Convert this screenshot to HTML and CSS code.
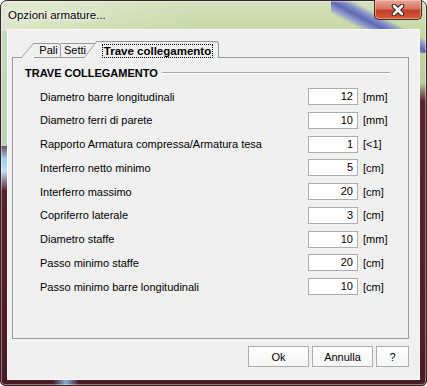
FILE: index.html
```html
<!DOCTYPE html>
<html>

<head>
    <title>Opzioni armature...</title>
    <link rel="stylesheet" href="styles.css">
</head>

<body>
    <div class="window">
        <div class="titlebar">
            <span class="title">Opzioni armature...</span>
            <div class="close">
                <svg width="14" height="12" viewBox="0 0 14 12">
                    <path d="M3 2 L11 10 M11 2 L3 10" stroke="#3a2222" stroke-width="4.6" stroke-linecap="round"/>
                    <path d="M3 2 L11 10 M11 2 L3 10" stroke="#fff" stroke-width="2.6" stroke-linecap="round"/>
                </svg>
            </div>
        </div>

        <div class="client">
            <div class="tabs">
                <span class="tab tab-pali">Pali</span>
                <span class="tab tab-setti">Setti</span>
                <span class="tab tab-active"><span class="focus">Trave collegamento</span></span>
            </div>

            <div class="panel">
                <div class="group-title">
                    <b>TRAVE COLLEGAMENTO</b>
                    <span class="rule"></span>
                </div>

                <div class="rows">
                    <span class="label">Diametro barre longitudinali</span>
                    <div class="field">12</div>
                    <span class="unit">[mm]</span>

                    <span class="label">Diametro ferri di parete</span>
                    <div class="field">10</div>
                    <span class="unit">[mm]</span>

                    <span class="label">Rapporto Armatura compressa/Armatura tesa</span>
                    <div class="field">1</div>
                    <span class="unit">[&lt;1]</span>

                    <span class="label">Interferro netto minimo</span>
                    <div class="field">5</div>
                    <span class="unit">[cm]</span>

                    <span class="label">Interferro massimo</span>
                    <div class="field">20</div>
                    <span class="unit">[cm]</span>

                    <span class="label">Copriferro laterale</span>
                    <div class="field">3</div>
                    <span class="unit">[cm]</span>

                    <span class="label">Diametro staffe</span>
                    <div class="field">10</div>
                    <span class="unit">[mm]</span>

                    <span class="label">Passo minimo staffe</span>
                    <div class="field">20</div>
                    <span class="unit">[cm]</span>

                    <span class="label">Passo minimo barre longitudinali</span>
                    <div class="field">10</div>
                    <span class="unit">[cm]</span>
                </div>
            </div>

            <div class="buttons">
                <button class="btn btn-wide">Ok</button>
                <button class="btn btn-wide">Annulla</button>
                <button class="btn btn-small">?</button>
            </div>
        </div>
    </div>
</body>

</html>
```

FILE: styles.css
```css
* {
    margin: 0;
    box-sizing: border-box;
}

body {
    width: 427px;
    height: 386px;
    overflow: hidden;
    font-family: "Liberation Sans", Arial, sans-serif;
    font-size: 11px;
    color: #000;
}

/* glass frame */
.window {
    width: 427px;
    height: 386px;
    padding: 0 6px 5px 6px;
    display: flex;
    flex-direction: column;
    border: 1px solid #3a2327;
    border-radius: 7px 7px 5px 5px;
    box-shadow: inset 0 0 0 1px rgba(255, 255, 255, 0.4);
    background:
        linear-gradient(28deg, transparent 38%, #8f97cf 44%, #5f68b2 50%, #8a93cb 56%, transparent 62%) no-repeat 330px 0 / 97px 52px,
        linear-gradient(to right, rgba(255, 255, 255, 0.35), rgba(255, 255, 255, 0) 45%) no-repeat 0 0 / 427px 30px,
        linear-gradient(to bottom, transparent, #9ccaee 35%, #c0e0f8 60%, transparent) no-repeat 0 140px / 8px 50px,
        linear-gradient(to bottom, #cdd8c0, #c4cfb8) no-repeat 0 0 / 8px 145px,
        linear-gradient(to right, transparent, #86aed2, transparent) no-repeat 52px 379px / 26px 7px,
        linear-gradient(to bottom, #d3e1bd 0, #c2d79d 40px, #b9cc9e 82px, #5b2430 100px, #4b1b25 100%);
}

.titlebar {
    height: 28px;
    display: flex;
    justify-content: space-between;
    align-items: flex-start;
    padding-left: 1px;
}

.title {
    padding-top: 8px;
    font-size: 11.5px;
    text-shadow: 0 0 6px #fff, 0 0 3px #fff, 0 0 10px rgba(255, 255, 255, 0.8);
}

.close {
    width: 48px;
    height: 20px;
    margin-top: -1px;
    margin-right: -2px;
    display: flex;
    align-items: center;
    justify-content: center;
    border: 1px solid #4a2522;
    border-top: none;
    border-radius: 0 0 5px 5px;
    background: linear-gradient(to bottom, #e9a796 0, #d87563 45%, #c2402a 55%, #d65b36 100%);
    box-shadow: inset 0 0 0 1px rgba(255, 220, 200, 0.45);
}

.client {
    flex: 1;
    border: 1px solid rgba(255, 255, 255, 0.6);
    background-color: #f0f0f0;
    padding-top: 11px;
}

/* tab strip */
.tabs {
    height: 17px;
    margin-left: 26px;
    margin-bottom: -1px;
    display: flex;
    align-items: flex-start;
    position: relative;
    z-index: 1;
}

.tab {
    position: relative;
    height: 14px;
    margin-top: 2px;
    line-height: 13px;
    text-align: center;
    border-top: 1px solid #9a9a9a;
    border-right: 1px solid #9a9a9a;
    border-top-right-radius: 3px;
    background-color: #f0f0f0;
}

.tab-pali {
    width: 27px;
    padding-left: 3px;
}

.tab-pali::before,
.tab-active::before {
    content: "";
    position: absolute;
    left: -13px;
    top: -1px;
    bottom: -1px;
    width: 13px;
    background:
        linear-gradient(to bottom right, transparent calc(50% - 0.7px), #9a9a9a 50%, transparent calc(50% + 0.7px)),
        linear-gradient(to bottom right, transparent 50%, #f0f0f0 50%);
}

.tab-setti {
    width: 39px;
    padding-right: 10px;
}

.tab-active {
    width: 122px;
    height: 17px;
    margin-top: 0;
    margin-left: -3px;
    padding-top: 2px;
    font-weight: bold;
    z-index: 2;
}

.tab-active::before {
    bottom: 0;
}

.focus {
    display: inline-block;
    padding: 0 1px;
    line-height: 12px;
    border: 1px dotted #000;
    font-size: 11.5px;
}

.panel {
    width: 397px;
    height: 282px;
    margin-left: 4px;
    border: 1px solid #9a9a9a;
    background-color: #f0f0f0;
}

.group-title {
    height: 14px;
    margin-top: 8px;
    padding: 0 18px 0 12px;
    display: flex;
    align-items: center;
    gap: 4px;
}

.group-title b {
    font-size: 11px;
}

.rule {
    flex: 1;
    height: 2px;
    border-top: 1px solid #a8a8a8;
    border-bottom: 1px solid #fff;
}

.rows {
    margin-top: 8px;
    padding-left: 27px;
    display: grid;
    grid-template-columns: 263px 50px auto;
    grid-auto-rows: 17px;
    column-gap: 5px;
    row-gap: 6.75px;
    align-items: center;
}

.field {
    height: 17px;
    padding-right: 4px;
    line-height: 15px;
    text-align: right;
    border: 1px solid #adadad;
    background-color: #fff;
}

.buttons {
    margin-top: 7px;
    padding-right: 10px;
    display: flex;
    justify-content: flex-end;
    gap: 3px;
}

.btn {
    height: 21px;
    font-family: inherit;
    font-size: 11px;
    color: #000;
    border: 1px solid #adadad;
    background: linear-gradient(to bottom, #fdfdfd, #f6f6f6);
}

.btn-wide {
    width: 61px;
}

.btn-small {
    width: 33px;
}
```
